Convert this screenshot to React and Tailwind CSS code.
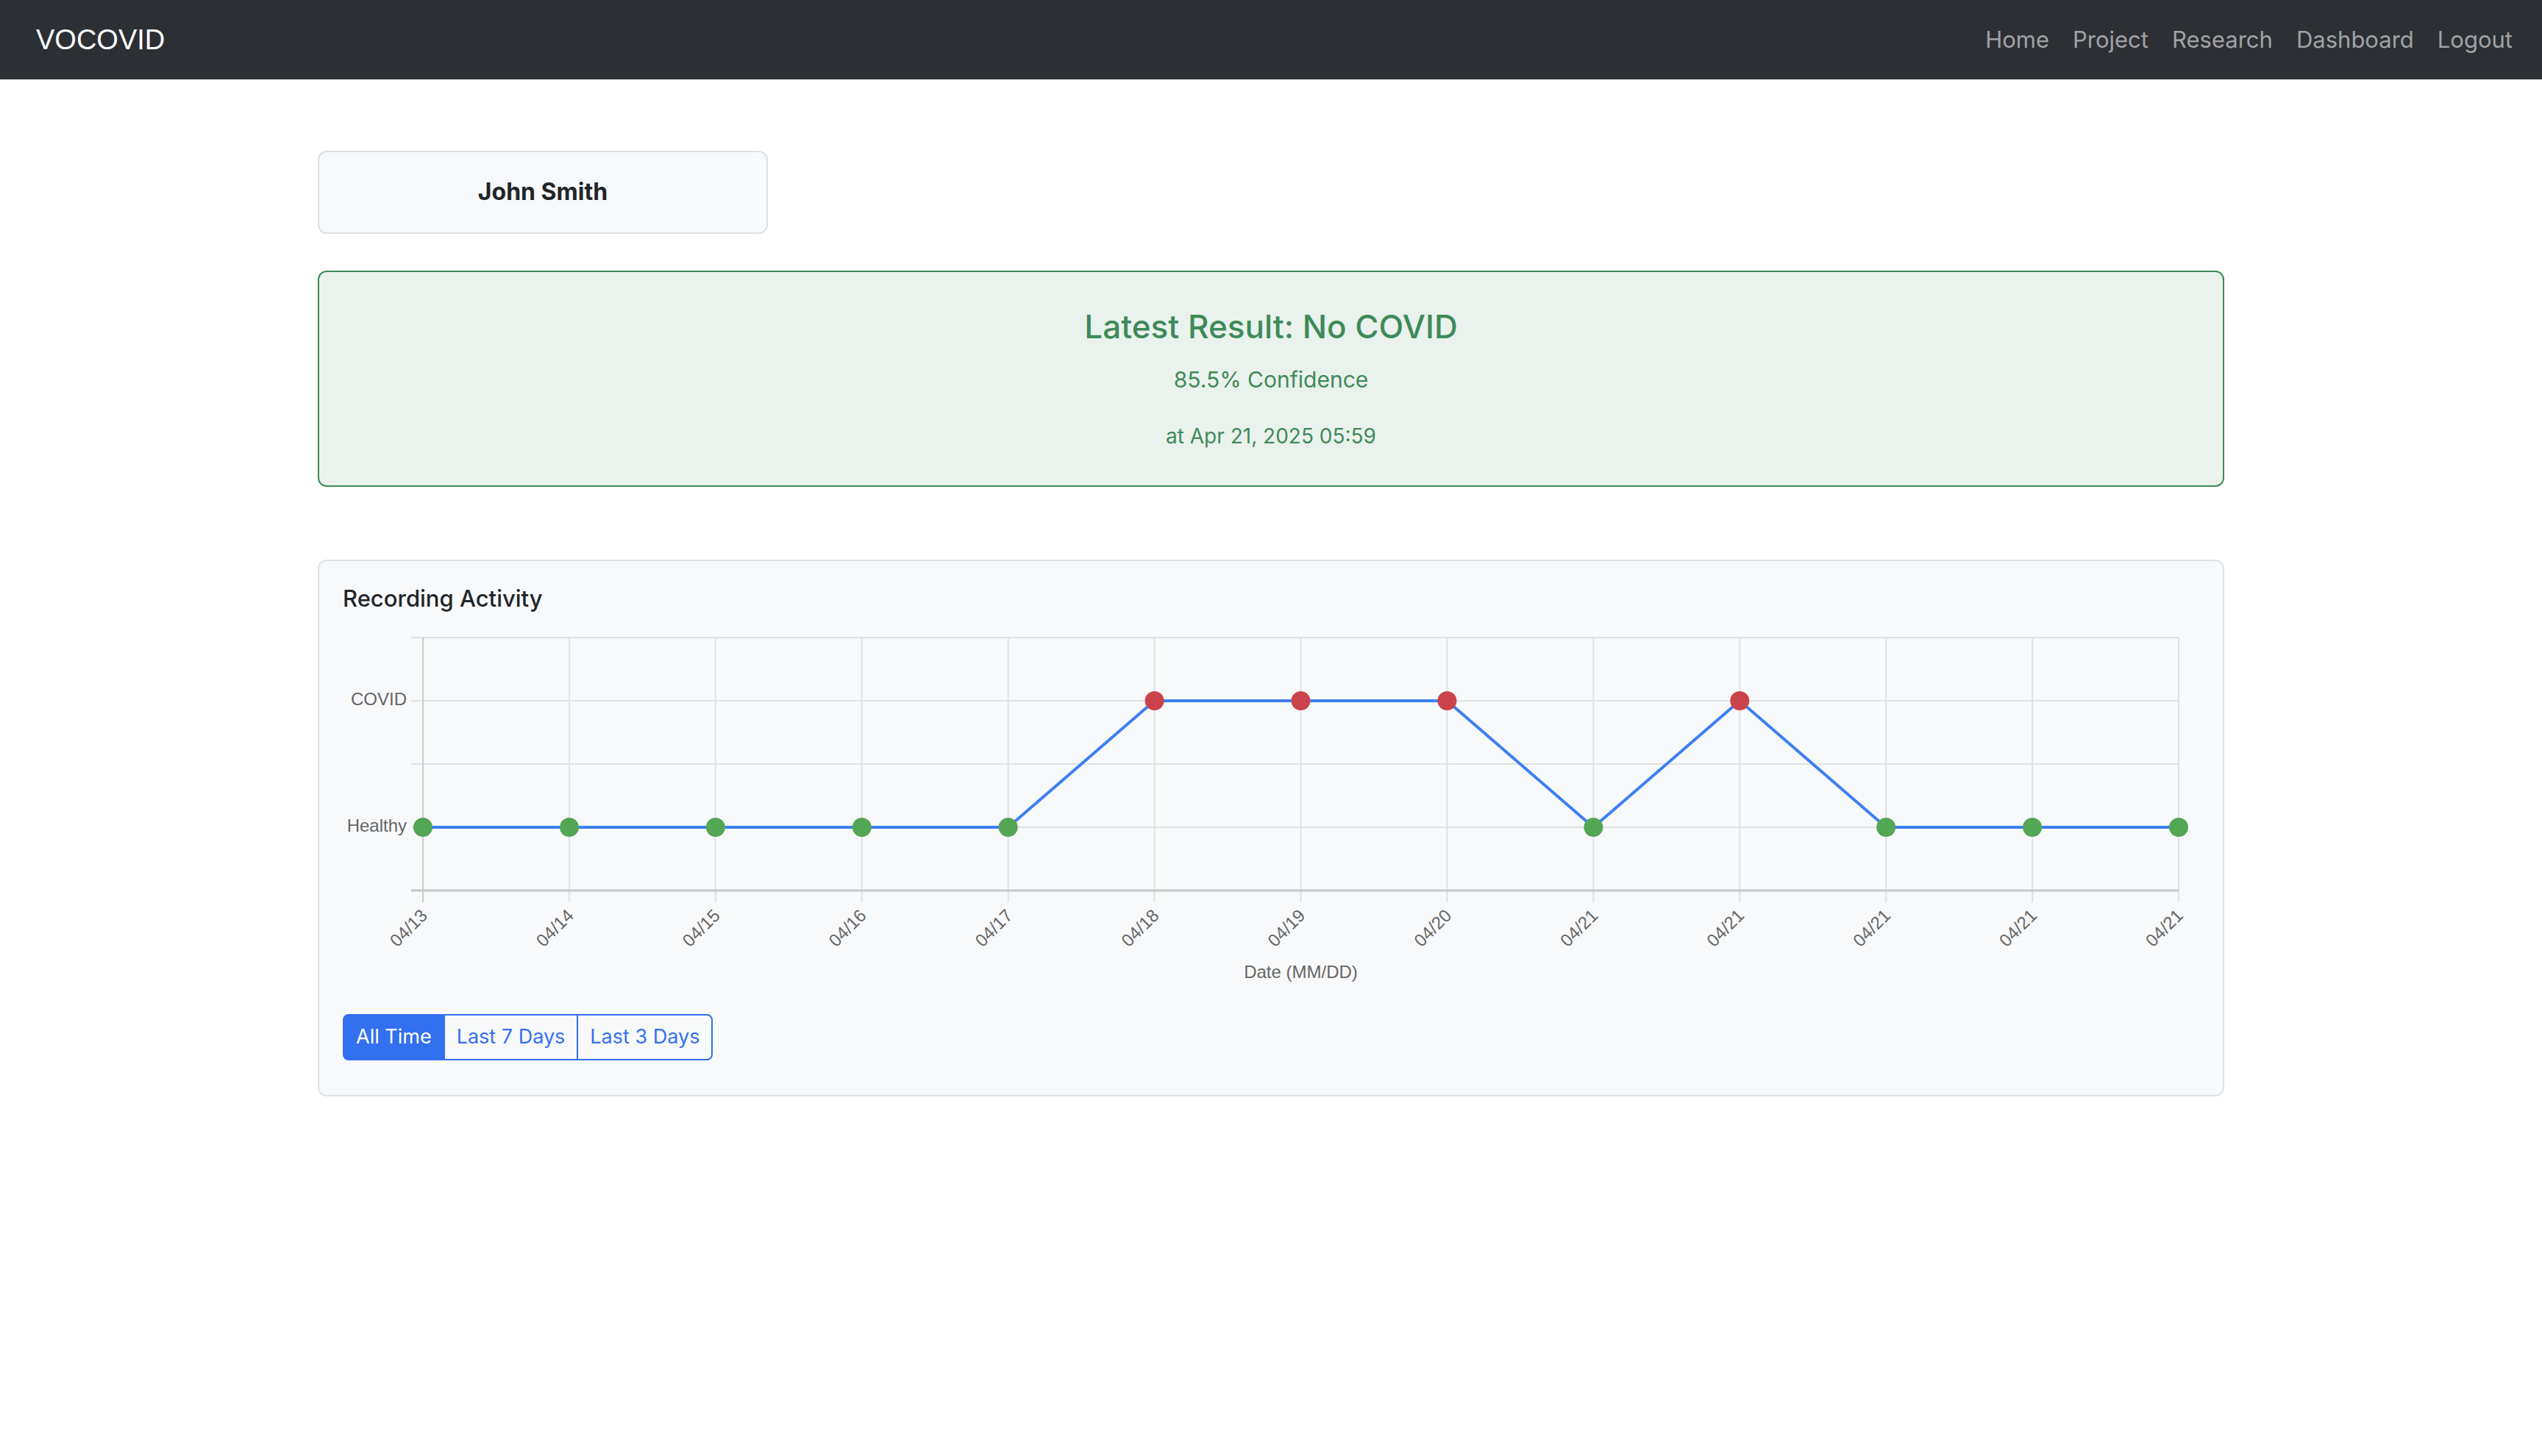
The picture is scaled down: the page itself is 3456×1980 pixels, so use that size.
import React, { useState } from "react";

const points = [
  { label: "04/13", covid: false },
  { label: "04/14", covid: false },
  { label: "04/15", covid: false },
  { label: "04/16", covid: false },
  { label: "04/17", covid: false },
  { label: "04/18", covid: true },
  { label: "04/19", covid: true },
  { label: "04/20", covid: true },
  { label: "04/21", covid: false },
  { label: "04/21", covid: true },
  { label: "04/21", covid: false },
  { label: "04/21", covid: false },
  { label: "04/21", covid: false },
];

// plot geometry (svg units = screen px)
const X0 = 109;
const X1 = 2496;
const STEP = (X1 - X0) / (points.length - 1);
const Y_TOP = 16;
const Y_COVID = 102;
const Y_MID = 188;
const Y_HEALTHY = 274;
const Y_BOTTOM = 360;

const ActivityChart = () => {
  const xs = points.map((_, i) => X0 + i * STEP);
  const line = points
    .map((p, i) => `${xs[i]},${p.covid ? Y_COVID : Y_HEALTHY}`)
    .join(" ");

  return (
    <svg width="2522" height="500" viewBox="0 0 2522 500" className="block font-['Liberation_Sans',Arial,sans-serif]">
      {/* horizontal grid */}
      {[Y_TOP, Y_COVID, Y_MID, Y_HEALTHY].map((y) => (
        <line key={y} x1={X0 - 16} x2={X1} y1={y} y2={y} stroke="#e0e1e3" strokeWidth="2" />
      ))}
      {/* vertical grid + ticks */}
      {xs.map((x, i) => (
        <line key={i} x1={x} x2={x} y1={Y_TOP} y2={Y_BOTTOM + 16} stroke={i === 0 ? "#c9cacc" : "#e0e1e3"} strokeWidth="2" />
      ))}
      <line x1={X0 - 16} x2={X1} y1={Y_BOTTOM} y2={Y_BOTTOM} stroke="#c6c7c9" strokeWidth="3" />

      <text x={X0 - 22} y={Y_COVID} textAnchor="end" dominantBaseline="middle" fontSize="24" fill="#666">COVID</text>
      <text x={X0 - 22} y={Y_HEALTHY} textAnchor="end" dominantBaseline="middle" fontSize="24" fill="#666">Healthy</text>

      <polyline points={line} fill="none" stroke="#3b7ff5" strokeWidth="4" strokeLinejoin="round" />
      {points.map((p, i) => (
        <circle key={i} cx={xs[i]} cy={p.covid ? Y_COVID : Y_HEALTHY} r="13" fill={p.covid ? "#ca434a" : "#53a653"} />
      ))}

      {points.map((p, i) => (
        <text
          key={i}
          transform={`translate(${xs[i] + 3} ${Y_BOTTOM + 31}) rotate(-45)`}
          textAnchor="end"
          dominantBaseline="middle"
          fontSize="24"
          fill="#666"
        >
          {p.label}
        </text>
      ))}

      <text x={(X0 + X1) / 2} y="473" textAnchor="middle" dominantBaseline="middle" fontSize="24" fill="#666">Date (MM/DD)</text>
    </svg>
  );
};

const App = () => {
  const [range, setRange] = useState("all");
  const ranges = [
    { id: "all", label: "All Time" },
    { id: "7", label: "Last 7 Days" },
    { id: "3", label: "Last 3 Days" },
  ];

  return (
    <div className="min-h-screen bg-white font-[Inter,sans-serif] text-[#212529]">
      <nav className="h-[108px] bg-[#2c2f34] flex items-center justify-between pl-[49px] pr-[24px]">
        <a className="text-white text-[38px] font-['Liberation_Sans',Arial,sans-serif] leading-none">VOCOVID</a>
        <div className="flex items-center">
          {["Home", "Project", "Research", "Dashboard", "Logout"].map((l) => (
            <a key={l} className="px-4 text-[31px] text-[#a1a2a4] leading-[48px]">{l}</a>
          ))}
        </div>
      </nav>

      <div className="w-[2592px] mx-auto pt-[97px]">
        <div className="w-[612px] h-[113px] bg-[#f8f9fa] border-2 border-[#dee2e6] rounded-[12px] flex items-center justify-center">
          <h5 className="text-[32px] font-bold leading-[1.2]">John Smith</h5>
        </div>

        <div className="mt-[50px] bg-[#eaf2ed] border-2 border-[#3f8a59] rounded-[12px] pt-[48px] pb-[46px] text-center text-[#3e8a5a]">
          <h4 className="text-[44px] font-medium leading-[53px]">Latest Result: No COVID</h4>
          <p className="mt-[21px] text-[30px] leading-[48px]">85.5% Confidence</p>
          <p className="mt-[32px] text-[28px] leading-[42px]">at Apr 21, 2025 05:59</p>
        </div>

        <div className="mt-[99px] bg-[#f8f9fa] border-2 border-[#dee2e6] rounded-[12px] px-[32px] pt-[32px] pb-[47px]">
          <h5 className="text-[31px] font-medium leading-[38px]">Recording Activity</h5>
          <div className="mt-[18px]">
            <ActivityChart />
          </div>
          <div className="mt-[28px] inline-flex">
            {ranges.map((r, i) => (
              <button
                key={r.id}
                onClick={() => setRange(r.id)}
                className={`h-[63px] px-[16px] text-[27px] border-2 border-[#3370f0] ${
                  range === r.id ? "bg-[#3370f0] text-white" : "bg-transparent text-[#3370f0]"
                } ${i === 0 ? "rounded-l-[8px]" : "-ml-[2px]"} ${i === ranges.length - 1 ? "rounded-r-[8px]" : ""}`}
              >
                {r.label}
              </button>
            ))}
          </div>
        </div>
      </div>
    </div>
  );
};

export default App;
